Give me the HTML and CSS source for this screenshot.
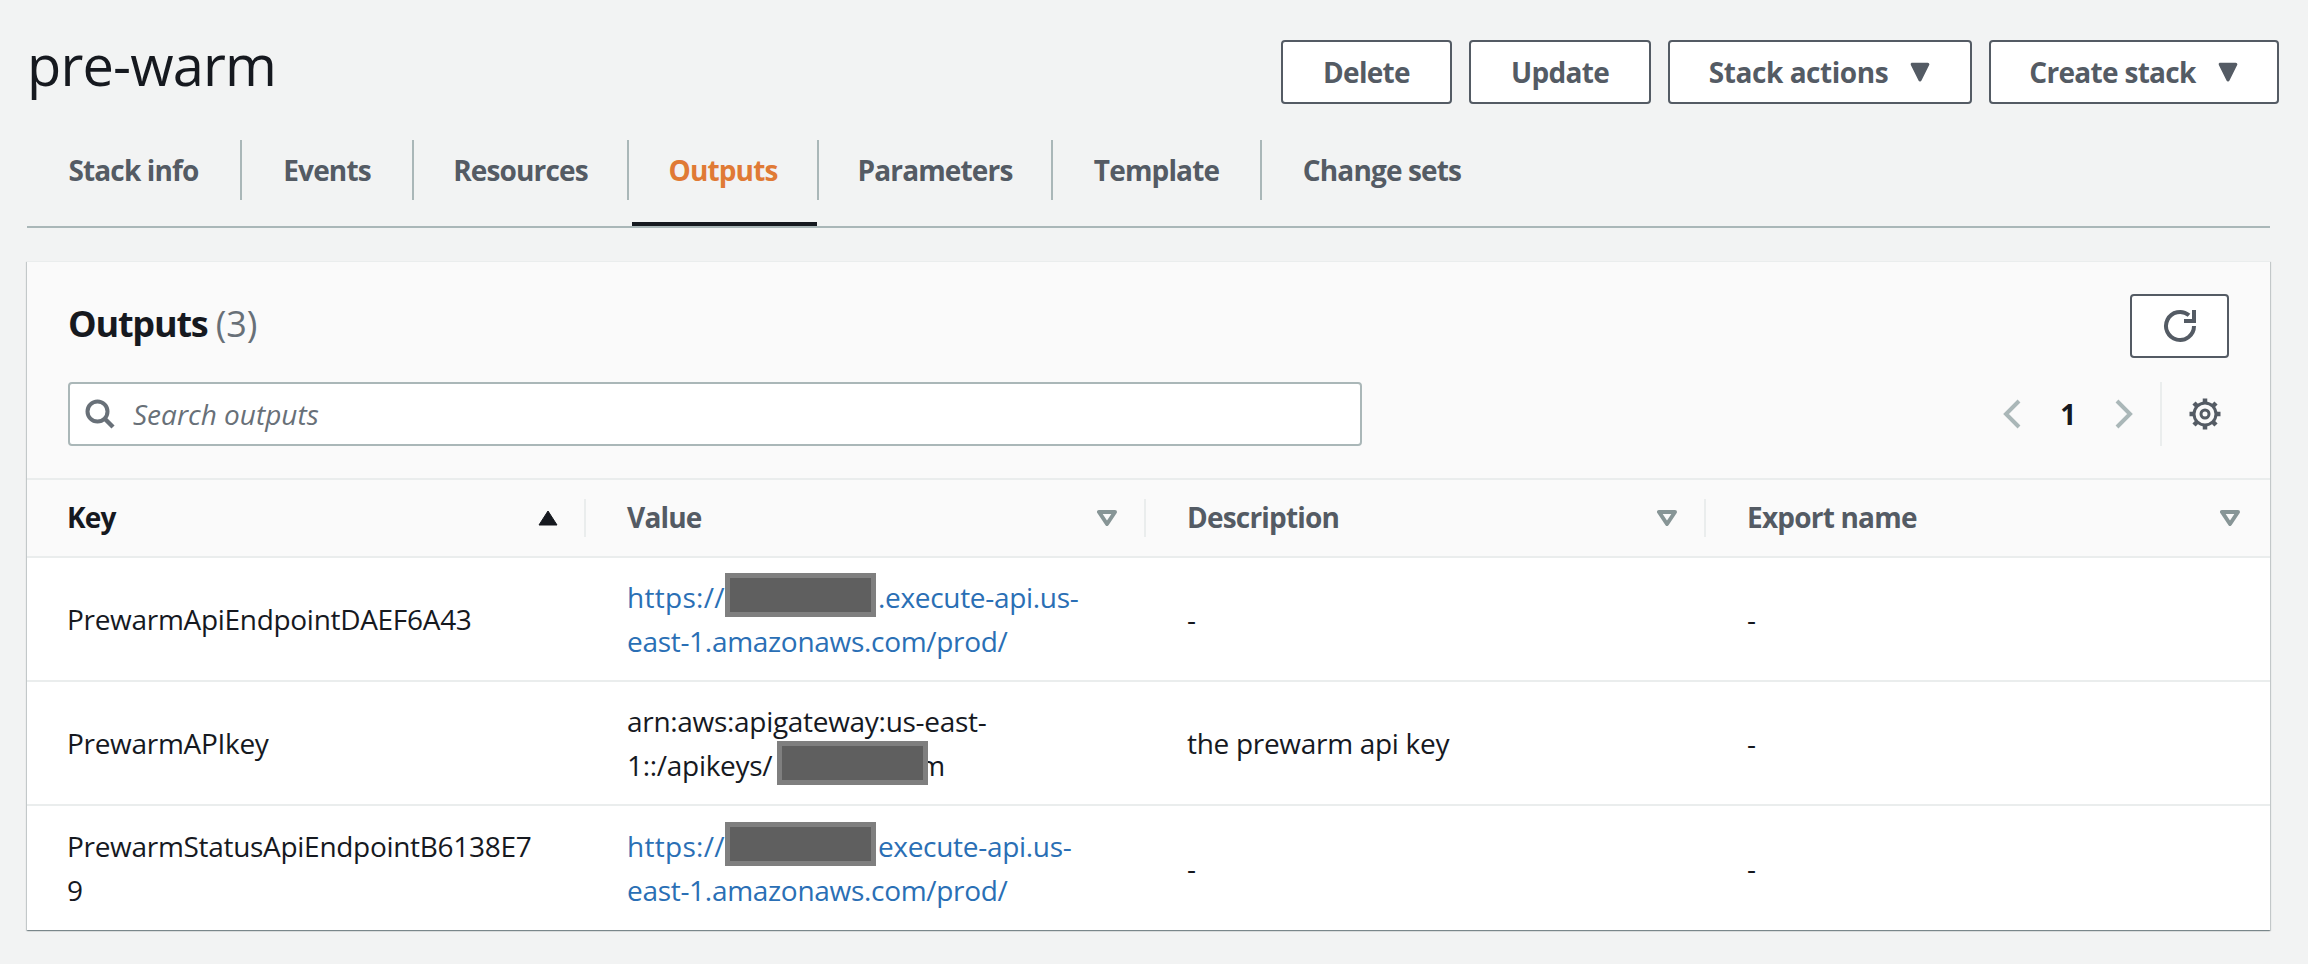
FILE: index.html
```html
<!DOCTYPE html>
<html lang="en">
<head>
<meta charset="utf-8">
<title>pre-warm</title>
<link rel="stylesheet" href="styles.css">
</head>
<body>
<div class="page">
  <header class="page-head">
    <h1 class="title">pre-warm</h1>
    <div class="actions">
      <button class="btn btn-delete">Delete</button>
      <button class="btn btn-update">Update</button>
      <button class="btn btn-drop btn-stack">Stack actions<svg class="caret" viewBox="0 0 20 18"><path d="M3 2h14L10 16z" fill="#545b64" stroke="#545b64" stroke-width="3" stroke-linejoin="round"/></svg></button>
      <button class="btn btn-drop btn-create">Create stack<svg class="caret" viewBox="0 0 20 18"><path d="M3 2h14L10 16z" fill="#545b64" stroke="#545b64" stroke-width="3" stroke-linejoin="round"/></svg></button>
    </div>
  </header>

  <nav class="tabs">
    <a class="tab tab-1">Stack info</a>
    <a class="tab tab-2">Events</a>
    <a class="tab tab-3">Resources</a>
    <a class="tab tab-4 active">Outputs</a>
    <a class="tab tab-5">Parameters</a>
    <a class="tab tab-6">Template</a>
    <a class="tab tab-7">Change sets</a>
  </nav>

  <section class="card">
    <div class="card-head">
      <div class="card-title-row">
        <h2 class="card-title">Outputs <span class="count">(3)</span></h2>
        <button class="refresh" aria-label="Refresh">
          <svg viewBox="0 0 34 34" width="34" height="34"><path d="M31 17a14 14 0 1 1-5-10.700" fill="none" stroke="#545b64" stroke-width="4"/><path d="M33 1v13H21v-4h8V1z" fill="#545b64"/></svg>
        </button>
      </div>
      <div class="tools">
        <div class="search">
          <svg class="search-icon" viewBox="0 0 30 30" width="30" height="30"><circle cx="12.5" cy="12.5" r="10" fill="none" stroke="#687078" stroke-width="4"/><path d="M20 20l8 8" stroke="#687078" stroke-width="4.5" fill="none"/></svg>
          <span class="placeholder">Search outputs</span>
        </div>
        <div class="pager">
          <svg class="chev" viewBox="0 0 18 30" width="18" height="30"><path d="M16 2L3 15l13 13" fill="none" stroke="#aab7b8" stroke-width="4"/></svg>
          <span class="page-num">1</span>
          <svg class="chev" viewBox="0 0 18 30" width="18" height="30"><path d="M2 2l13 13L2 28" fill="none" stroke="#aab7b8" stroke-width="4"/></svg>
          <span class="pager-gear">
            <svg viewBox="0 0 32 32" width="32" height="32"><circle cx="16" cy="16" r="4" fill="none" stroke="#545b64" stroke-width="3"/><circle cx="16" cy="16" r="11" fill="none" stroke="#545b64" stroke-width="3"/><path d="M16 0.500v5M16 26.500v5M0.500 16h5M26.500 16h5M5 5l3.500 3.500M23.500 23.500L27 27M5 27l3.500-3.500M23.500 8.500L27 5" stroke="#545b64" stroke-width="4.500" fill="none"/></svg>
          </span>
        </div>
      </div>
    </div>

    <div class="row row-head">
      <div class="th th-sorted"><span>Key</span><svg class="sort" viewBox="0 0 20 16" width="20" height="16"><path d="M10 1l9 14H1z" fill="#16191f" stroke="#16191f" stroke-linejoin="round"/></svg></div>
      <div class="th"><span>Value</span><svg class="sort" viewBox="0 0 20 16" width="20" height="16"><path d="M2 2h16L10 14z" fill="none" stroke="#879596" stroke-width="4" stroke-linejoin="round"/></svg></div>
      <div class="th"><span>Description</span><svg class="sort" viewBox="0 0 20 16" width="20" height="16"><path d="M2 2h16L10 14z" fill="none" stroke="#879596" stroke-width="4" stroke-linejoin="round"/></svg></div>
      <div class="th th-last"><span>Export name</span><svg class="sort" viewBox="0 0 20 16" width="20" height="16"><path d="M2 2h16L10 14z" fill="none" stroke="#879596" stroke-width="4" stroke-linejoin="round"/></svg></div>
    </div>

    <div class="row row-body">
      <div class="td">PrewarmApiEndpointDAEF6A43</div>
      <div class="td"><a class="link"><span class="proto">https://</span><span class="redact"></span>.execute-api.us-<br>east-1.amazonaws.com/prod/</a></div>
      <div class="td">-</div>
      <div class="td">-</div>
    </div>
    <div class="row row-body">
      <div class="td">PrewarmAPIkey</div>
      <div class="td">arn:aws:apigateway:us-east-<br>1::/apikeys/<span class="redact redact-over"></span>m</div>
      <div class="td">the prewarm api key</div>
      <div class="td">-</div>
    </div>
    <div class="row row-body row-last">
      <div class="td">PrewarmStatusApiEndpointB6138E7<br>9</div>
      <div class="td"><a class="link"><span class="proto">https://</span><span class="redact"></span>execute-api.us-<br>east-1.amazonaws.com/prod/</a></div>
      <div class="td">-</div>
      <div class="td">-</div>
    </div>
  </section>
</div>
</body>
</html>
```

FILE: styles.css
```css
* { box-sizing: border-box; }
html, body { margin: 0; padding: 0; }
body {
  background: #f2f3f3;
  color: #16191f;
  font-family: "Open Sans", "Noto Sans", sans-serif;
  font-size: 28px;
  line-height: 44px;
  letter-spacing: -0.3px;
  width: 2308px;
  height: 964px;
  overflow: hidden;
}
.page { padding: 40px 38px 0 27px; }

.page-head {
  display: flex;
  justify-content: space-between;
  align-items: flex-start;
  margin-right: -9px;
}
.title {
  margin: 0;
  font-size: 56px;
  line-height: 48px;
  font-weight: 400;
  letter-spacing: -0.85px;
  color: #16191f;
}
.actions { display: flex; gap: 17px; }
.btn {
  height: 64px;
  border: 2px solid #545b64;
  border-radius: 4px;
  background: #fff;
  color: #545b64;
  font: 700 28px/1 "Open Sans", sans-serif;
  letter-spacing: -0.7px;
  padding: 0;
  display: flex;
  align-items: center;
  justify-content: center;
}
.btn-delete { width: 171px; }
.btn-update { width: 182px; }
.btn-stack { width: 304px; letter-spacing: -0.45px; }
.btn-create { width: 290px; }
.caret { width: 22px; height: 20px; margin-left: 21px; }

.tabs {
  display: flex;
  margin-top: 36px;
  padding-bottom: 26px;
  border-bottom: 2px solid #aab7b8;
}
.tab {
  position: relative;
  height: 60px;
  display: flex;
  align-items: center;
  justify-content: center;
  font-weight: 700;
  letter-spacing: -0.85px;
  color: #545b64;
  border-right: 2px solid #aab7b8;
}
.tab-1 { width: 215px; }
.tab-2 { width: 172px; }
.tab-3 { width: 215px; }
.tab-4 { width: 190px; }
.tab-5 { width: 234px; }
.tab-6 { width: 209px; }
.tab-7 { width: 240px; border-right: 0; }
.tab.active { color: #e07a35; }
.tab.active::after {
  content: "";
  position: absolute;
  left: 3px;
  right: 0;
  bottom: -26px;
  height: 4px;
  background: #16191f;
}

.card {
  margin-top: 33px;
  background: #fff;
  box-shadow: 0 1px 1px 0 rgba(0,28,36,.3), 1px 1px 1px 0 rgba(0,28,36,.15), -1px 1px 1px 0 rgba(0,28,36,.15);
  border-top: 1px solid #eaeded;
}
.card-head {
  background: #fafafa;
  height: 218px;
  padding: 32px 41px 0;
  border-bottom: 2px solid #eaeded;
}
.card-title-row { display: flex; justify-content: space-between; align-items: flex-start; }
.card-title {
  margin: 0;
  padding-top: 8px;
  font-size: 36px;
  line-height: 44px;
  font-weight: 700;
  letter-spacing: -1.2px;
}
.count { font-weight: 400; letter-spacing: 0; color: #687078; }
.refresh {
  width: 99px;
  height: 64px;
  padding: 0;
  background: #fff;
  border: 2px solid #545b64;
  border-radius: 4px;
  display: flex;
  align-items: center;
  justify-content: center;
}
.tools { display: flex; justify-content: space-between; margin-top: 24px; }
.search {
  width: 1294px;
  height: 64px;
  background: #fff;
  border: 2px solid #aab7b8;
  border-radius: 4px;
  display: flex;
  align-items: center;
  padding-left: 15px;
}
.search-icon { flex: none; }
.placeholder { margin-left: 18px; font-style: italic; letter-spacing: 0; color: #687078; }
.pager { display: flex; align-items: center; height: 64px; margin-right: -1px; }
.page-num { width: 94px; text-align: center; font-weight: 700; }
.pager-gear {
  display: flex;
  align-items: center;
  height: 64px;
  margin-left: 27px;
  padding-left: 27px;
  padding-right: 9px;
  border-left: 2px solid #eaeded;
}

.row {
  display: grid;
  grid-template-columns: 559px 560px 560px 1fr;
}
.row-head {
  background: #fafafa;
  height: 78px;
  border-bottom: 2px solid #eaeded;
  align-items: center;
}
.th {
  display: flex;
  align-items: center;
  justify-content: space-between;
  height: 38px;
  padding: 0 27px 0 41px;
  font-weight: 700;
  letter-spacing: -0.8px;
  color: #545b64;
  border-right: 2px solid #eaeded;
}
.th span { margin-top: -2px; }
.th-sorted { color: #16191f; padding-right: 26px; }
.th-last { border-right: 0; padding-right: 30px; }
.row-body { height: 124px; border-bottom: 2px solid #eaeded; align-items: center; }
.row-last { border-bottom: 0; height: 124px; }
.td { padding: 0 0 0 41px; color: #16191f; }
.th:first-child, .td:first-child { padding-left: 40px; }
.link { color: #2a6fb5; }
.proto { letter-spacing: 0.3px; }
.redact {
  display: inline-block;
  width: 151px;
  height: 44px;
  margin: -2px 2px 2px 0;
  vertical-align: top;
  background: #5f5f5f;
  border: 5px solid #7f7f7f;
}
.redact-over {
  position: relative;
  margin-left: 5px;
  margin-right: -9px;
}
```
